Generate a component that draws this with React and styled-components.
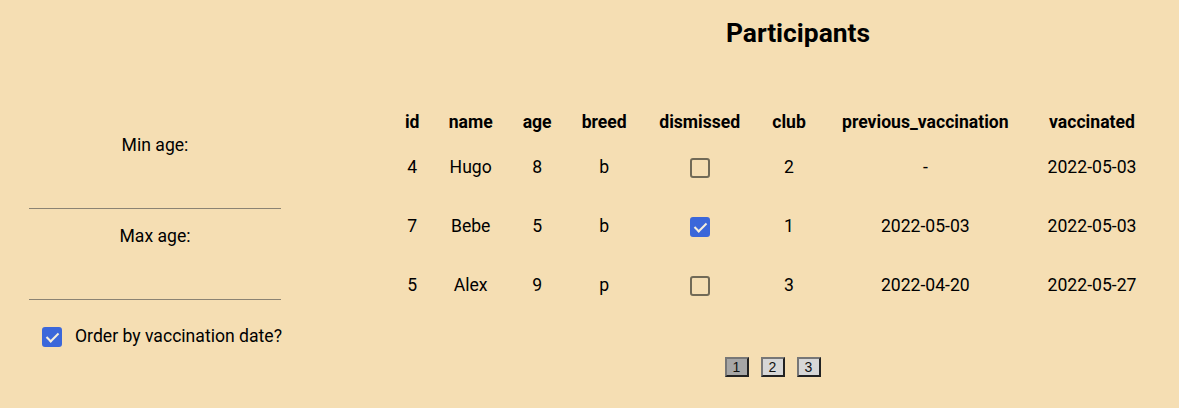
import styled, { createGlobalStyle } from "styled-components";

const GlobalStyle = createGlobalStyle`
  html, body {
    margin: 0;
    background: wheat;
    font-family: Roboto, "Liberation Sans", sans-serif;
    color: #000;
  }
`;

const Page = styled.div`
  display: flex;
  min-height: 408px;
  background: wheat;
`;

const Sidebar = styled.aside`
  width: 310px;
  box-sizing: border-box;
  padding: 135px 29px 0;
  display: flex;
  flex-direction: column;
`;

const Field = styled.div`
  display: flex;
  flex-direction: column;
  align-items: center;
  margin-bottom: 17px;
`;

const FieldLabel = styled.label`
  font-size: 17.6px;
  line-height: 21px;
`;

const AgeInput = styled.input`
  width: 100%;
  height: 42px;
  box-sizing: border-box;
  margin-top: 11px;
  border: none;
  border-bottom: 1px solid #8b8373;
  background: transparent;
  font: inherit;
  outline: none;
`;

const CheckRow = styled.label`
  display: flex;
  align-items: center;
  gap: 13px;
  margin-top: 9px;
  padding-left: 13px;
  font-size: 17.6px;
  line-height: 21px;
  white-space: nowrap;
`;

const Check = styled.input.attrs({ type: "checkbox" })`
  appearance: none;
  position: relative;
  width: 20px;
  height: 20px;
  margin: 0;
  flex-shrink: 0;
  box-sizing: border-box;
  border-radius: 3px;
  border: 2px solid #716a57;
  background: transparent;
  vertical-align: middle;

  &:checked {
    background: #3b67da;
    border-color: #3b67da;
  }

  &:checked::after {
    content: "";
    position: absolute;
    left: 5px;
    top: 1px;
    width: 5px;
    height: 10px;
    border: solid #f6efdc;
    border-width: 0 2px 2px 0;
    transform: rotate(45deg);
  }
`;

const Main = styled.main`
  flex: 1;
  display: flex;
  flex-direction: column;
`;

const Title = styled.h1`
  margin: 18px 0 0;
  padding-left: 107px;
  text-align: center;
  font-size: 26.4px;
  line-height: 31px;
  font-weight: 700;
`;

const TableBlock = styled.div`
  margin: 57px 0 0 81px;
  width: 763px;
  display: flex;
  flex-direction: column;
  align-items: center;
`;

const Table = styled.table`
  width: 100%;
  border-collapse: collapse;
  font-size: 17.6px;
  line-height: 21px;
`;

const Th = styled.th`
  height: 32px;
  padding: 0 12px;
  font-weight: 700;
  text-align: center;
  white-space: nowrap;
`;

const Td = styled.td`
  height: 59px;
  padding: 0 12px;
  text-align: center;
  vertical-align: middle;
  white-space: nowrap;
`;

const Pager = styled.div`
  display: flex;
  gap: 12px;
  margin-top: 42px;
`;

const PageButton = styled.button`
  width: 24px;
  height: 20px;
  padding: 0;
  box-sizing: border-box;
  font-family: "Liberation Sans", Arial, sans-serif;
  font-size: 14px;
  line-height: 16px;
  color: #111;
  background: ${(p) => (p.$active ? "#a6a6a6" : "#d7d7d7")};
  border: 2px solid;
  border-color: #777 #222 #222 #777;
  cursor: pointer;
`;

const rows = [
  { id: 4, name: "Hugo", age: 8, breed: "b", dismissed: false, club: 2, prev: "-", vacc: "2022-05-03" },
  { id: 7, name: "Bebe", age: 5, breed: "b", dismissed: true, club: 1, prev: "2022-05-03", vacc: "2022-05-03" },
  { id: 5, name: "Alex", age: 9, breed: "p", dismissed: false, club: 3, prev: "2022-04-20", vacc: "2022-05-27" },
];

const columns = ["id", "name", "age", "breed", "dismissed", "club", "previous_vaccination", "vaccinated"];

export default function App() {
  return (
    <>
      <GlobalStyle />
      <Page>
        <Sidebar>
          <Field>
            <FieldLabel htmlFor="min-age">Min age:</FieldLabel>
            <AgeInput id="min-age" type="number" />
          </Field>
          <Field>
            <FieldLabel htmlFor="max-age">Max age:</FieldLabel>
            <AgeInput id="max-age" type="number" />
          </Field>
          <CheckRow>
            <Check defaultChecked />
            Order by vaccination date?
          </CheckRow>
        </Sidebar>

        <Main>
          <Title>Participants</Title>
          <TableBlock>
            <Table>
              <thead>
                <tr>
                  {columns.map((c) => (
                    <Th key={c}>{c}</Th>
                  ))}
                </tr>
              </thead>
              <tbody>
                {rows.map((r) => (
                  <tr key={r.id}>
                    <Td>{r.id}</Td>
                    <Td>{r.name}</Td>
                    <Td>{r.age}</Td>
                    <Td>{r.breed}</Td>
                    <Td>
                      <Check defaultChecked={r.dismissed} />
                    </Td>
                    <Td>{r.club}</Td>
                    <Td>{r.prev}</Td>
                    <Td>{r.vacc}</Td>
                  </tr>
                ))}
              </tbody>
            </Table>
            <Pager>
              <PageButton $active>1</PageButton>
              <PageButton>2</PageButton>
              <PageButton>3</PageButton>
            </Pager>
          </TableBlock>
        </Main>
      </Page>
    </>
  );
}
